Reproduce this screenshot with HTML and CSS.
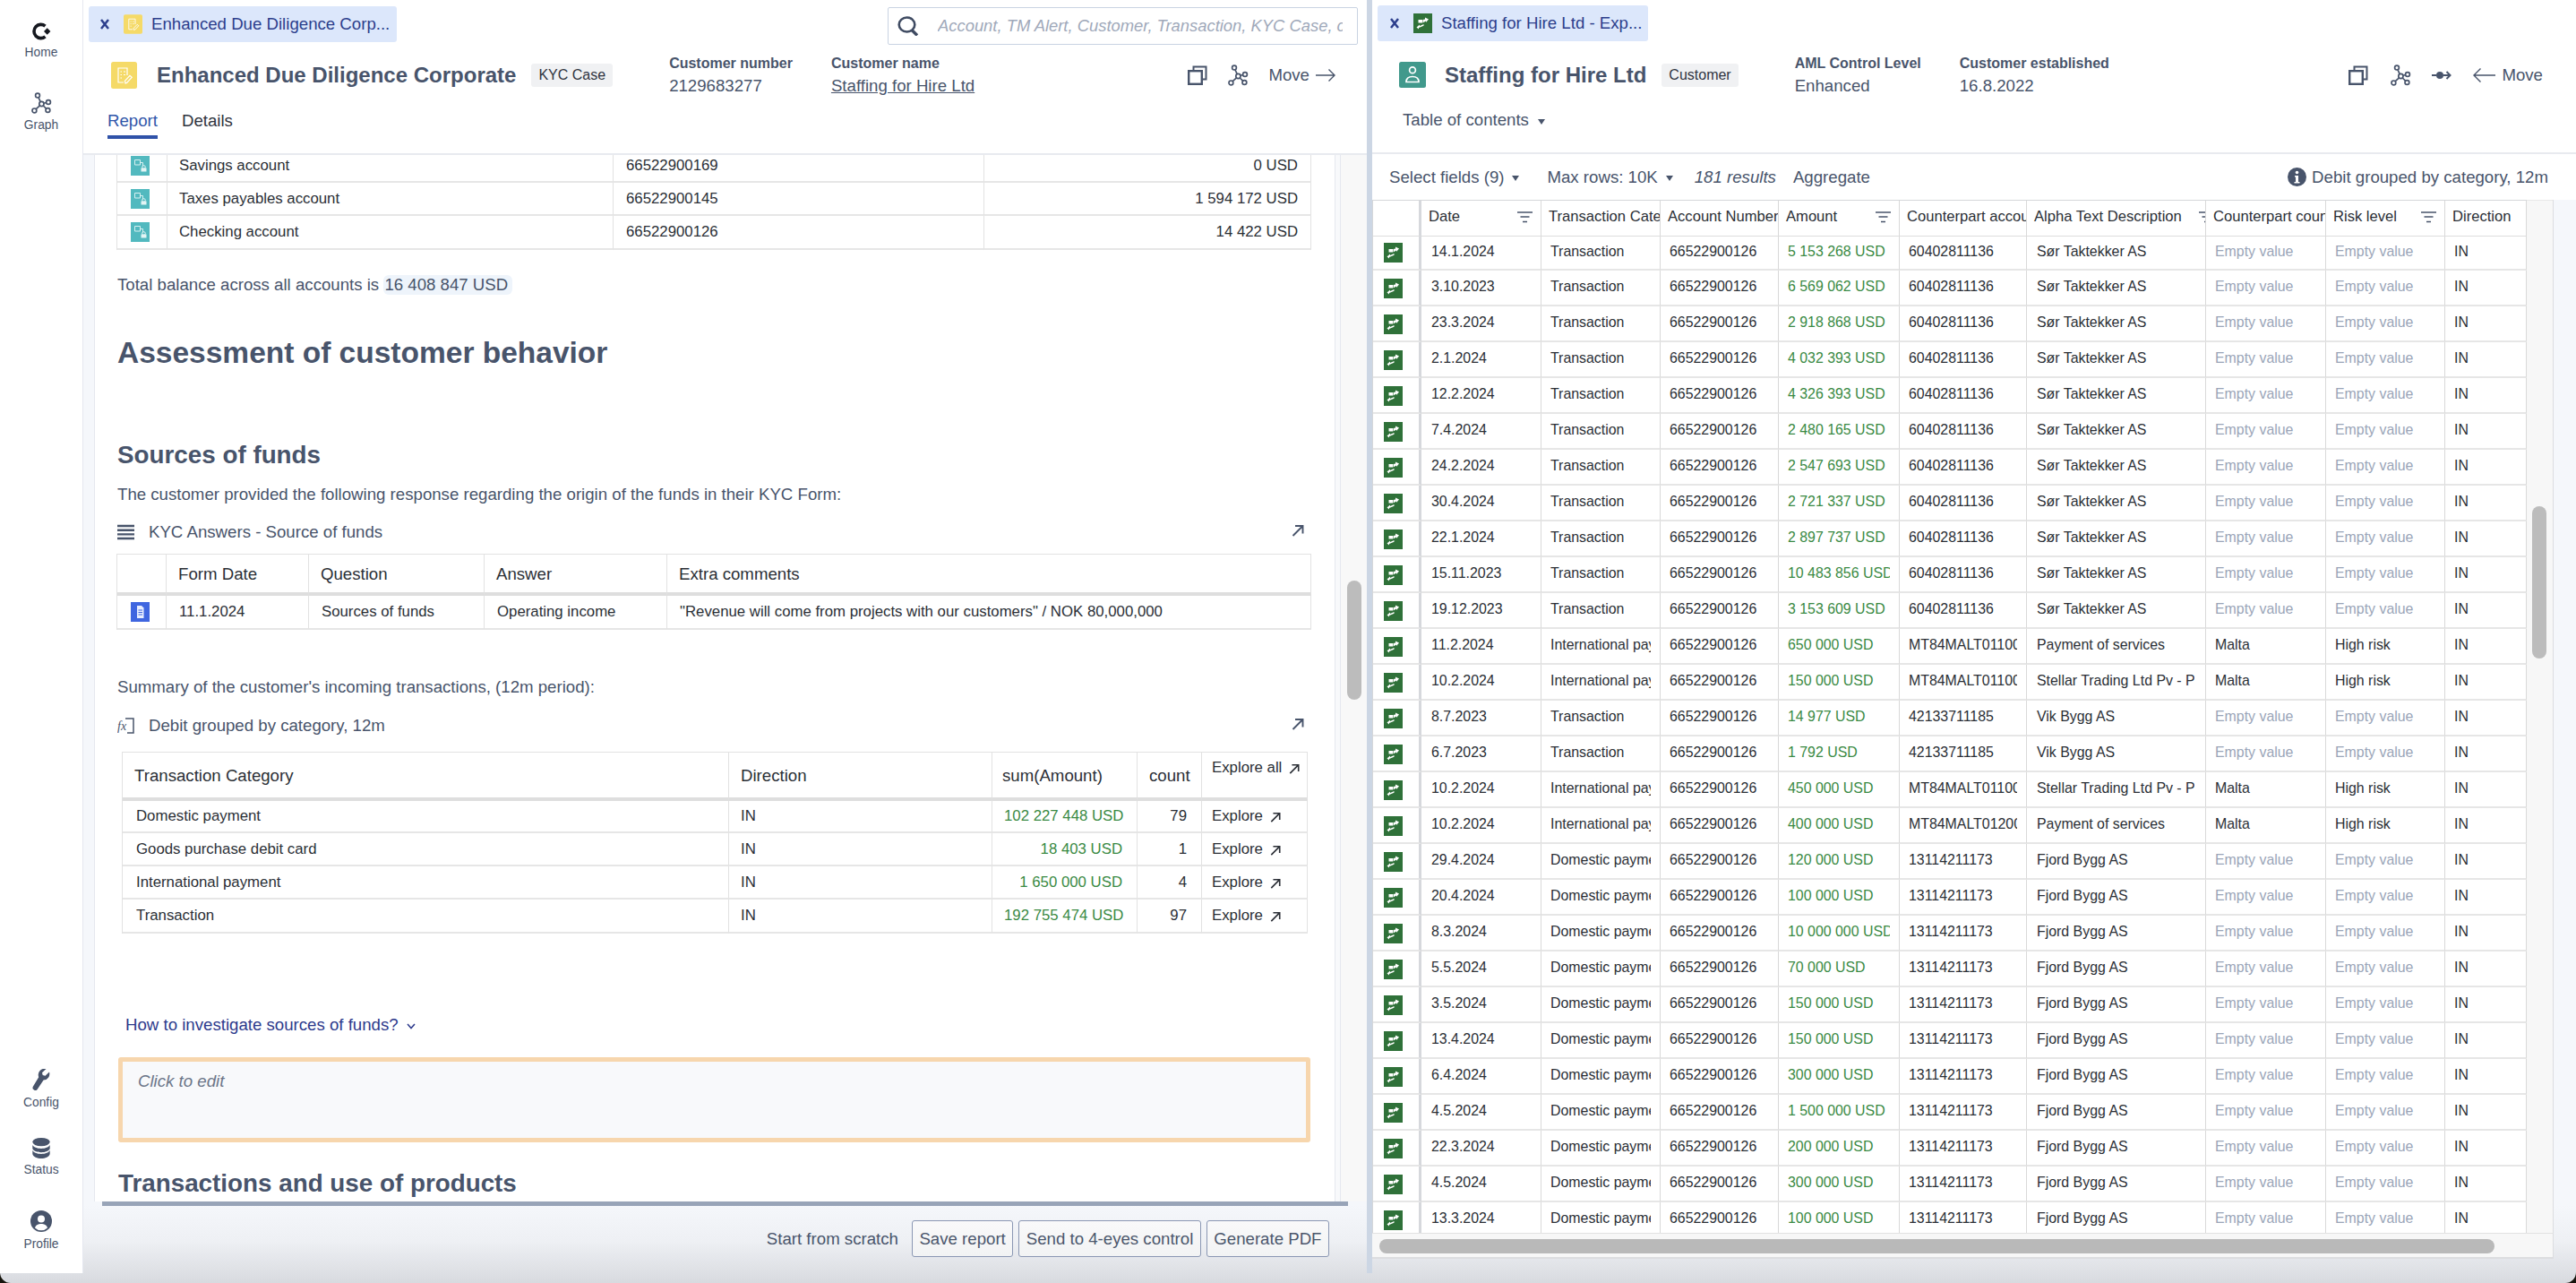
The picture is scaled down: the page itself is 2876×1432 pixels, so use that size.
FILE: index.html
```html
<!DOCTYPE html>
<html lang="en">
<head>
<meta charset="utf-8">
<title>Enhanced Due Diligence Corporate</title>
<link rel="stylesheet" href="styles.css">
</head>
<body>
<svg class="defs" xmlns="http://www.w3.org/2000/svg">
  <symbol id="i-logo" viewBox="0 0 24 24"><path d="M16.5 6.2A7.6 7.6 0 1 0 16.5 17.8" fill="none" stroke="#15181f" stroke-width="3.6"/><path d="M15 12l3.7-3.7 3.7 3.7-3.7 3.7z" fill="#15181f"/></symbol>
  <symbol id="i-graph" viewBox="0 0 24 24"><g fill="none" stroke="currentColor" stroke-width="1.7"><circle cx="8" cy="3.6" r="2.4"/><circle cx="20" cy="11" r="2.4"/><circle cx="19.4" cy="20" r="2.4"/><circle cx="4.4" cy="20.4" r="2.4"/><circle cx="12.4" cy="13" r="2.6"/><path d="M9 5.8l2.3 5M15 12.3l2.7-.8M14.2 15l3.4 3.2M10.5 14.8l-4.5 4"/></g></symbol>
  <symbol id="i-case" viewBox="0 0 29 30"><rect width="29" height="30" rx="2.5" fill="#f5da68"/><g fill="none" stroke="#fff" stroke-width="1.2"><path d="M18 15V7H8v16h6"/><path d="M10.5 11h1.5M14 11h2M10.5 14.5h1.5M14 14.5h2M10.5 18h1.5"/><path d="M16 24l-.6-2.6 5.6-6 2.2 2-5.6 6z"/></g></symbol>
  <symbol id="i-cust" viewBox="0 0 30 29"><rect width="30" height="29" rx="2.5" fill="#41998c"/><g fill="none" stroke="#fff" stroke-width="1.7"><circle cx="15" cy="9.2" r="3.4"/><path d="M8 22.5c0-4 2.600-6 7-6s7 2 7 6z"/></g></symbol>
  <symbol id="i-txn" viewBox="0 0 21 22"><rect width="21" height="22" fill="#2f7139"/><g fill="#fff"><path d="M5.500 7h4.500v3.500H5.500z"/><path d="M10.500 7l2.500-.5V4.500l4 2-3 3.500V8.500l-3.500 2z"/><path d="M11.500 12l-4.500 2v-1.500L3.500 15.500 6 17.500v-1.500l5.500-2.200z"/></g></symbol>
  <symbol id="i-acct" viewBox="0 0 21 22"><rect width="21" height="22" fill="#52b9bf"/><g fill="none" stroke="#d7f0f1" stroke-width="1"><path d="M4.500 4.500h6v5.500h-6z"/><path d="M10.500 7.500h3v4"/></g><path d="M11.500 13.500h6v4h-6z" fill="#e3f5f5"/><circle cx="14.500" cy="12.500" r="1.800" fill="none" stroke="#e3f5f5"/></symbol>
  <symbol id="i-form" viewBox="0 0 21 22"><rect width="21" height="22" fill="#3f66e0"/><path d="M7 4h5l2.500 2.500V18H7z" fill="#e8eeff"/><path d="M8.500 9h4.500M8.500 11.500h4.500M8.500 14h4.500" stroke="#3f66e0"/></symbol>
  <symbol id="i-copy" viewBox="0 0 22 22"><path d="M6.500 6V1.500h14v14H16" fill="none" stroke="currentColor" stroke-width="2"/><rect x="1.200" y="6.200" width="14.600" height="14.600" fill="none" stroke="currentColor" stroke-width="2.400"/></symbol>
  <symbol id="i-right" viewBox="0 0 22 16"><path d="M0 8h21M14.500 1.500L21 8l-6.500 6.500" fill="none" stroke="currentColor" stroke-width="1.400"/></symbol>
  <symbol id="i-left" viewBox="0 0 25 18"><path d="M25 9H1M8.500 1.500L1 9l7.500 7.500" fill="none" stroke="currentColor" stroke-width="1.400"/></symbol>
  <symbol id="i-link" viewBox="0 0 22 12"><path d="M0 6h5M13 6h7M16.500 2L20.500 6l-4 4" fill="none" stroke="currentColor" stroke-width="2"/><circle cx="9" cy="6" r="4" fill="currentColor"/></symbol>
  <symbol id="i-search" viewBox="0 0 24 22"><ellipse cx="10.500" cy="9.500" rx="8.800" ry="8" fill="none" stroke="currentColor" stroke-width="2.600"/><path d="M16 15.500l6 6" stroke="currentColor" stroke-width="3.400"/></symbol>
  <symbol id="i-ne" viewBox="0 0 14 14"><path d="M1.500 13L12 2.500M4 2h8.500v8.500" fill="none" stroke="currentColor" stroke-width="1.900"/></symbol>
  <symbol id="i-filter" viewBox="0 0 17 13"><path d="M0 1h17M3.500 6h10M6 11.500h5" fill="none" stroke="currentColor" stroke-width="1.700"/></symbol>
  <symbol id="i-list" viewBox="0 0 19 17"><path d="M0 1.500h19M0 6.200h19M0 10.900h19M0 15.500h19" stroke="currentColor" stroke-width="2.400"/></symbol>
  <symbol id="i-fx" viewBox="0 0 19 18"><path d="M9 1h9v16h-7" fill="none" stroke="currentColor" stroke-width="1.500"/><text x="0" y="14" font-family="Liberation Serif" font-style="italic" font-size="14" fill="currentColor">fx</text></symbol>
  <symbol id="i-info" viewBox="0 0 21 21"><circle cx="10.500" cy="10.500" r="10.500" fill="currentColor"/><circle cx="10.500" cy="5.500" r="1.800" fill="#fff"/><path d="M8 9h4v7h1.500v1.500h-6V16H9V10.500H8z" fill="#fff"/></symbol>
  <symbol id="i-wrench" viewBox="0 0 24 24"><path d="M21 3.500l-4.500 4.300-2.800-.8-.7-2.800L17.500 0a7 7 0 0 0-8.300 9.200L3 19.500a2.900 2.900 0 0 0 4.600 3.500l7-10.400A7 7 0 0 0 21 3.500z" fill="currentColor"/></symbol>
  <symbol id="i-db" viewBox="0 0 24 26"><g fill="currentColor"><ellipse cx="12" cy="5" rx="10.500" ry="5"/><path d="M1.500 8.500c1 3 5.500 4.500 10.500 4.500s9.500-1.500 10.500-4.500V13c-1 3-5.500 4.500-10.500 4.500S2.500 16 1.500 13z"/><path d="M1.500 15c1 3 5.500 4.500 10.500 4.500S21.500 18 22.500 15v4.500c-1 3.500-5.500 5.500-10.500 5.500S2.500 23 1.500 19.500z"/></g></symbol>
  <symbol id="i-user" viewBox="0 0 24 24"><circle cx="12" cy="12" r="12" fill="currentColor"/><circle cx="12" cy="9.500" r="4" fill="#fff"/><path d="M5 19.500c1-3.500 4-4.500 7-4.500s6 1 7 4.500A10 10 0 0 1 5 19.500z" fill="#fff"/></symbol>
  <symbol id="i-x" viewBox="0 0 10 12"><path d="M1 1l8 10M9 1L1 11" fill="none" stroke="currentColor" stroke-width="2.500"/></symbol>
  <symbol id="i-chev" viewBox="0 0 10 7"><path d="M1 1l4 4.500L9 1" fill="none" stroke="currentColor" stroke-width="1.500"/></symbol>
</svg>

<div class="app">
  <nav class="sidebar">
    <div class="nav-group">
      <a class="nav-item"><svg class="nav-ic"><use href="#i-logo"/></svg><span>Home</span></a>
      <a class="nav-item nav-graph"><svg class="nav-ic"><use href="#i-graph"/></svg><span>Graph</span></a>
    </div>
    <div class="nav-group low">
      <a class="nav-item nav-config"><svg class="nav-ic"><use href="#i-wrench"/></svg><span>Config</span></a>
      <a class="nav-item nav-status"><svg class="nav-ic"><use href="#i-db"/></svg><span>Status</span></a>
      <a class="nav-item nav-profile"><svg class="nav-ic"><use href="#i-user"/></svg><span>Profile</span></a>
    </div>
  </nav>

  <section class="panel left">
    <div class="topbar">
      <div class="tab"><svg class="tab-x"><use href="#i-x"/></svg><svg class="tab-ic"><use href="#i-case"/></svg><span>Enhanced Due Diligence Corp...</span></div>
      <div class="search"><svg class="search-ic"><use href="#i-search"/></svg><span class="search-text">Account, TM Alert, Customer, Transaction, KYC Case, customer</span></div>
    </div>
    <header class="head">
      <svg class="head-ic"><use href="#i-case"/></svg>
      <h1 class="title">Enhanced Due Diligence Corporate</h1>
      <span class="badge">KYC Case</span>
      <div class="meta">
        <div><b>Customer number</b><span>2129683277</span></div>
        <div><b>Customer name</b><a class="ul">Staffing for Hire Ltd</a></div>
      </div>
      <div class="actions">
        <svg class="a-copy"><use href="#i-copy"/></svg>
        <svg class="a-graph"><use href="#i-graph"/></svg>
        <span class="move">Move <svg class="a-arrow"><use href="#i-right"/></svg></span>
      </div>
    </header>
    <div class="tabs"><a class="on">Report</a><a>Details</a></div>

    <div class="rbody">
      <div class="gut"></div>
      <div class="paper">
        <table class="tb acct">
          <colgroup><col class="w56"><col class="w498"><col class="w414"><col class="w365"></colgroup>
          <tr><td class="ic"><svg class="cell-ic"><use href="#i-acct"/></svg></td><td>Savings account</td><td>66522900169</td><td class="r">0 USD</td></tr>
          <tr><td class="ic"><svg class="cell-ic"><use href="#i-acct"/></svg></td><td>Taxes payables account</td><td>66522900145</td><td class="r">1 594 172 USD</td></tr>
          <tr><td class="ic"><svg class="cell-ic"><use href="#i-acct"/></svg></td><td>Checking account</td><td>66522900126</td><td class="r">14 422 USD</td></tr>
        </table>
        <p class="txt total">Total balance across all accounts is <span class="hl">16 408 847 USD</span></p>
        <h2 class="h-big">Assessment of customer behavior</h2>
        <h3 class="h-mid funds">Sources of funds</h3>
        <p class="txt resp">The customer provided the following response regarding the origin of the funds in their KYC Form:</p>
        <div class="cap kyc-cap"><svg class="cap-ic"><use href="#i-list"/></svg><span>KYC Answers - Source of funds</span><svg class="cap-go"><use href="#i-ne"/></svg></div>
        <table class="tb kyc">
          <colgroup><col class="w55"><col class="w159"><col class="w196"><col class="w204"><col class="w719"></colgroup>
          <tr><th></th><th>Form Date</th><th>Question</th><th>Answer</th><th>Extra comments</th></tr>
          <tr><td class="ic"><svg class="cell-ic"><use href="#i-form"/></svg></td><td>11.1.2024</td><td>Sources of funds</td><td>Operating income</td><td>"Revenue will come from projects with our customers" / NOK 80,000,000</td></tr>
        </table>
        <p class="txt summary">Summary of the customer's incoming transactions, (12m period):</p>
        <div class="cap debit-cap"><svg class="cap-ic"><use href="#i-fx"/></svg><span>Debit grouped by category, 12m</span><svg class="cap-go"><use href="#i-ne"/></svg></div>
        <table class="tb sum">
          <colgroup><col class="w677"><col class="w294"><col class="w162"><col class="w72"><col class="w118"></colgroup>
          <tr><th>Transaction Category</th><th>Direction</th><th>sum(Amount)</th><th>count</th><th class="ex-all">Explore all <svg class="ex-go"><use href="#i-ne"/></svg></th></tr>
          <tr><td>Domestic payment</td><td>IN</td><td class="r g">102 227 448 USD</td><td class="r">79</td><td>Explore <svg class="ex-go"><use href="#i-ne"/></svg></td></tr>
          <tr><td>Goods purchase debit card</td><td>IN</td><td class="r g">18 403 USD</td><td class="r">1</td><td>Explore <svg class="ex-go"><use href="#i-ne"/></svg></td></tr>
          <tr><td>International payment</td><td>IN</td><td class="r g">1 650 000 USD</td><td class="r">4</td><td>Explore <svg class="ex-go"><use href="#i-ne"/></svg></td></tr>
          <tr><td>Transaction</td><td>IN</td><td class="r g">192 755 474 USD</td><td class="r">97</td><td>Explore <svg class="ex-go"><use href="#i-ne"/></svg></td></tr>
        </table>
        <a class="howto">How to investigate sources of funds? <svg class="chev"><use href="#i-chev"/></svg></a>
        <div class="editbox">Click to edit</div>
        <h3 class="h-mid trans">Transactions and use of products</h3>
      </div>
      <div class="edge"></div>
      <div class="vgut"><div class="thumb"></div></div>
    </div>
    <div class="rule"></div>
    <footer class="foot">
      <span class="scratch">Start from scratch</span>
      <button class="btn">Save report</button>
      <button class="btn">Send to 4-eyes control</button>
      <button class="btn">Generate PDF</button>
    </footer>
  </section>

  <div class="divider"></div>

  <section class="panel right">
    <div class="topbar">
      <div class="tab tab2"><svg class="tab-x"><use href="#i-x"/></svg><svg class="tab-ic"><use href="#i-txn"/></svg><span>Staffing for Hire Ltd - Exp...</span></div>
    </div>
    <header class="head head2">
      <svg class="head-ic"><use href="#i-cust"/></svg>
      <h1 class="title">Staffing for Hire Ltd</h1>
      <span class="badge">Customer</span>
      <div class="meta">
        <div><b>AML Control Level</b><span>Enhanced</span></div>
        <div><b>Customer established</b><span>16.8.2022</span></div>
      </div>
      <div class="actions">
        <svg class="a-copy"><use href="#i-copy"/></svg>
        <svg class="a-graph"><use href="#i-graph"/></svg>
        <svg class="a-link"><use href="#i-link"/></svg>
        <span class="move"><svg class="a-back"><use href="#i-left"/></svg> Move</span>
      </div>
    </header>
    <div class="toc">Table of contents <i class="caret"></i></div>
    <div class="tool">
      <span>Select fields (9)</span><i class="caret"></i>
      <span class="t-max">Max rows: 10K</span><i class="caret"></i>
      <em class="t-res">181 results</em>
      <span class="t-agg">Aggregate</span>
      <span class="t-info"><svg class="info-ic"><use href="#i-info"/></svg>Debit grouped by category, 12m</span>
    </div>
    <div class="gwrap">
      <div class="gclip">
        <table class="gt">
          <colgroup><col class="g0"><col class="g1"><col class="g2"><col class="g3"><col class="g4"><col class="g5"><col class="g6"><col class="g7"><col class="g8"><col class="g9"></colgroup>
          <thead><tr>
            <th></th>
            <th><div class="thf">Date<svg class="flt"><use href="#i-filter"/></svg></div></th>
            <th>Transaction Category</th>
            <th>Account Number</th>
            <th><div class="thf">Amount<svg class="flt"><use href="#i-filter"/></svg></div></th>
            <th>Counterpart account</th>
            <th><div class="thf wide">Alpha Text Description<svg class="flt"><use href="#i-filter"/></svg></div></th>
            <th>Counterpart country</th>
            <th><div class="thf">Risk level<svg class="flt"><use href="#i-filter"/></svg></div></th>
            <th>Direction</th>
          </tr></thead>
          <tbody>
<tr><td><svg class="cell-ic"><use href="#i-txn"/></svg></td><td>14.1.2024</td><td>Transaction</td><td>66522900126</td><td class="g">5 153 268 USD</td><td>60402811136</td><td>Sør Taktekker AS</td><td class="e">Empty value</td><td class="e">Empty value</td><td>IN</td></tr>
<tr><td><svg class="cell-ic"><use href="#i-txn"/></svg></td><td>3.10.2023</td><td>Transaction</td><td>66522900126</td><td class="g">6 569 062 USD</td><td>60402811136</td><td>Sør Taktekker AS</td><td class="e">Empty value</td><td class="e">Empty value</td><td>IN</td></tr>
<tr><td><svg class="cell-ic"><use href="#i-txn"/></svg></td><td>23.3.2024</td><td>Transaction</td><td>66522900126</td><td class="g">2 918 868 USD</td><td>60402811136</td><td>Sør Taktekker AS</td><td class="e">Empty value</td><td class="e">Empty value</td><td>IN</td></tr>
<tr><td><svg class="cell-ic"><use href="#i-txn"/></svg></td><td>2.1.2024</td><td>Transaction</td><td>66522900126</td><td class="g">4 032 393 USD</td><td>60402811136</td><td>Sør Taktekker AS</td><td class="e">Empty value</td><td class="e">Empty value</td><td>IN</td></tr>
<tr><td><svg class="cell-ic"><use href="#i-txn"/></svg></td><td>12.2.2024</td><td>Transaction</td><td>66522900126</td><td class="g">4 326 393 USD</td><td>60402811136</td><td>Sør Taktekker AS</td><td class="e">Empty value</td><td class="e">Empty value</td><td>IN</td></tr>
<tr><td><svg class="cell-ic"><use href="#i-txn"/></svg></td><td>7.4.2024</td><td>Transaction</td><td>66522900126</td><td class="g">2 480 165 USD</td><td>60402811136</td><td>Sør Taktekker AS</td><td class="e">Empty value</td><td class="e">Empty value</td><td>IN</td></tr>
<tr><td><svg class="cell-ic"><use href="#i-txn"/></svg></td><td>24.2.2024</td><td>Transaction</td><td>66522900126</td><td class="g">2 547 693 USD</td><td>60402811136</td><td>Sør Taktekker AS</td><td class="e">Empty value</td><td class="e">Empty value</td><td>IN</td></tr>
<tr><td><svg class="cell-ic"><use href="#i-txn"/></svg></td><td>30.4.2024</td><td>Transaction</td><td>66522900126</td><td class="g">2 721 337 USD</td><td>60402811136</td><td>Sør Taktekker AS</td><td class="e">Empty value</td><td class="e">Empty value</td><td>IN</td></tr>
<tr><td><svg class="cell-ic"><use href="#i-txn"/></svg></td><td>22.1.2024</td><td>Transaction</td><td>66522900126</td><td class="g">2 897 737 USD</td><td>60402811136</td><td>Sør Taktekker AS</td><td class="e">Empty value</td><td class="e">Empty value</td><td>IN</td></tr>
<tr><td><svg class="cell-ic"><use href="#i-txn"/></svg></td><td>15.11.2023</td><td>Transaction</td><td>66522900126</td><td class="g"><div class="c">10 483 856 USD</div></td><td>60402811136</td><td>Sør Taktekker AS</td><td class="e">Empty value</td><td class="e">Empty value</td><td>IN</td></tr>
<tr><td><svg class="cell-ic"><use href="#i-txn"/></svg></td><td>19.12.2023</td><td>Transaction</td><td>66522900126</td><td class="g">3 153 609 USD</td><td>60402811136</td><td>Sør Taktekker AS</td><td class="e">Empty value</td><td class="e">Empty value</td><td>IN</td></tr>
<tr><td><svg class="cell-ic"><use href="#i-txn"/></svg></td><td>11.2.2024</td><td><div class="c">International payment</div></td><td>66522900126</td><td class="g">650 000 USD</td><td><div class="c">MT84MALT011000000000</div></td><td>Payment of services</td><td>Malta</td><td>High risk</td><td>IN</td></tr>
<tr><td><svg class="cell-ic"><use href="#i-txn"/></svg></td><td>10.2.2024</td><td><div class="c">International payment</div></td><td>66522900126</td><td class="g">150 000 USD</td><td><div class="c">MT84MALT011000000000</div></td><td><div class="c">Stellar Trading Ltd Pv - Payment of services</div></td><td>Malta</td><td>High risk</td><td>IN</td></tr>
<tr><td><svg class="cell-ic"><use href="#i-txn"/></svg></td><td>8.7.2023</td><td>Transaction</td><td>66522900126</td><td class="g">14 977 USD</td><td>42133711185</td><td>Vik Bygg AS</td><td class="e">Empty value</td><td class="e">Empty value</td><td>IN</td></tr>
<tr><td><svg class="cell-ic"><use href="#i-txn"/></svg></td><td>6.7.2023</td><td>Transaction</td><td>66522900126</td><td class="g">1 792 USD</td><td>42133711185</td><td>Vik Bygg AS</td><td class="e">Empty value</td><td class="e">Empty value</td><td>IN</td></tr>
<tr><td><svg class="cell-ic"><use href="#i-txn"/></svg></td><td>10.2.2024</td><td><div class="c">International payment</div></td><td>66522900126</td><td class="g">450 000 USD</td><td><div class="c">MT84MALT011000000000</div></td><td><div class="c">Stellar Trading Ltd Pv - Payment of services</div></td><td>Malta</td><td>High risk</td><td>IN</td></tr>
<tr><td><svg class="cell-ic"><use href="#i-txn"/></svg></td><td>10.2.2024</td><td><div class="c">International payment</div></td><td>66522900126</td><td class="g">400 000 USD</td><td><div class="c">MT84MALT012000000000</div></td><td>Payment of services</td><td>Malta</td><td>High risk</td><td>IN</td></tr>
<tr><td><svg class="cell-ic"><use href="#i-txn"/></svg></td><td>29.4.2024</td><td><div class="c">Domestic payment</div></td><td>66522900126</td><td class="g">120 000 USD</td><td>13114211173</td><td>Fjord Bygg AS</td><td class="e">Empty value</td><td class="e">Empty value</td><td>IN</td></tr>
<tr><td><svg class="cell-ic"><use href="#i-txn"/></svg></td><td>20.4.2024</td><td><div class="c">Domestic payment</div></td><td>66522900126</td><td class="g">100 000 USD</td><td>13114211173</td><td>Fjord Bygg AS</td><td class="e">Empty value</td><td class="e">Empty value</td><td>IN</td></tr>
<tr><td><svg class="cell-ic"><use href="#i-txn"/></svg></td><td>8.3.2024</td><td><div class="c">Domestic payment</div></td><td>66522900126</td><td class="g"><div class="c">10 000 000 USD</div></td><td>13114211173</td><td>Fjord Bygg AS</td><td class="e">Empty value</td><td class="e">Empty value</td><td>IN</td></tr>
<tr><td><svg class="cell-ic"><use href="#i-txn"/></svg></td><td>5.5.2024</td><td><div class="c">Domestic payment</div></td><td>66522900126</td><td class="g">70 000 USD</td><td>13114211173</td><td>Fjord Bygg AS</td><td class="e">Empty value</td><td class="e">Empty value</td><td>IN</td></tr>
<tr><td><svg class="cell-ic"><use href="#i-txn"/></svg></td><td>3.5.2024</td><td><div class="c">Domestic payment</div></td><td>66522900126</td><td class="g">150 000 USD</td><td>13114211173</td><td>Fjord Bygg AS</td><td class="e">Empty value</td><td class="e">Empty value</td><td>IN</td></tr>
<tr><td><svg class="cell-ic"><use href="#i-txn"/></svg></td><td>13.4.2024</td><td><div class="c">Domestic payment</div></td><td>66522900126</td><td class="g">150 000 USD</td><td>13114211173</td><td>Fjord Bygg AS</td><td class="e">Empty value</td><td class="e">Empty value</td><td>IN</td></tr>
<tr><td><svg class="cell-ic"><use href="#i-txn"/></svg></td><td>6.4.2024</td><td><div class="c">Domestic payment</div></td><td>66522900126</td><td class="g">300 000 USD</td><td>13114211173</td><td>Fjord Bygg AS</td><td class="e">Empty value</td><td class="e">Empty value</td><td>IN</td></tr>
<tr><td><svg class="cell-ic"><use href="#i-txn"/></svg></td><td>4.5.2024</td><td><div class="c">Domestic payment</div></td><td>66522900126</td><td class="g">1 500 000 USD</td><td>13114211173</td><td>Fjord Bygg AS</td><td class="e">Empty value</td><td class="e">Empty value</td><td>IN</td></tr>
<tr><td><svg class="cell-ic"><use href="#i-txn"/></svg></td><td>22.3.2024</td><td><div class="c">Domestic payment</div></td><td>66522900126</td><td class="g">200 000 USD</td><td>13114211173</td><td>Fjord Bygg AS</td><td class="e">Empty value</td><td class="e">Empty value</td><td>IN</td></tr>
<tr><td><svg class="cell-ic"><use href="#i-txn"/></svg></td><td>4.5.2024</td><td><div class="c">Domestic payment</div></td><td>66522900126</td><td class="g">300 000 USD</td><td>13114211173</td><td>Fjord Bygg AS</td><td class="e">Empty value</td><td class="e">Empty value</td><td>IN</td></tr>
<tr><td><svg class="cell-ic"><use href="#i-txn"/></svg></td><td>13.3.2024</td><td><div class="c">Domestic payment</div></td><td>66522900126</td><td class="g">100 000 USD</td><td>13114211173</td><td>Fjord Bygg AS</td><td class="e">Empty value</td><td class="e">Empty value</td><td>IN</td></tr>
          </tbody>
        </table>
      </div>
      <div class="vgut2"><div class="thumb2"></div></div>
    </div>
    <div class="hgut"><div class="hthumb"></div></div>
  </section>
</div>
</body>
</html>
```

FILE: styles.css
```css
* { box-sizing: border-box; }
html, body { margin: 0; height: 100%; background: #16140c; }
body { font-family: "Liberation Sans", Arial, sans-serif; font-size: 18.65px; color: #48546b; overflow: hidden; }
.defs { display: none; }
svg { display: block; flex: none; }

.app {
  display: flex;
  width: 2876px;
  height: 1432px;
  overflow: hidden;
  border-radius: 0 0 12px 12px;
  background: linear-gradient(#f5f7fb 0, #f5f7fb 1345px, #eef0f4 1385px, #d8dadf 1432px);
}

/* sidebar */
.sidebar {
  width: 93px;
  height: 1421px;
  flex: none;
  display: flex;
  flex-direction: column;
  justify-content: space-between;
  background: #fff;
  border-right: 1px solid #e5e8ef;
  padding: 23px 0 23px;
}
.nav-group { display: flex; flex-direction: column; gap: 35px; }
.nav-group.low { gap: 0; }
.nav-item { display: flex; flex-direction: column; align-items: center; gap: 3px; font-size: 13.8px; line-height: 18px; color: #48546b; }
.nav-graph { gap: 4px; }
.nav-config { gap: 5px; margin-bottom: 30px; }
.nav-status { gap: 3px; margin-bottom: 36px; }
.nav-profile { gap: 5px; }
.nav-ic { width: 24px; height: 24px; color: #48546b; }

/* panels */
.panel { display: flex; flex-direction: column; height: 1432px; }
.left { width: 1433px; flex: none; }
.right { width: 1344px; flex: none; }
.divider { width: 6px; height: 1421px; flex: none; background: #ccd6e4; }

.topbar { height: 55px; display: flex; align-items: flex-start; padding-left: 6px; background: #fff; }
.tab {
  display: flex; align-items: center;
  width: 344px; height: 40px; margin-top: 7px; padding-left: 13px;
  background: #dce7fb; border-radius: 3px; color: #2c3e8c; white-space: nowrap;
}
.tab2 { width: 302px; margin-top: 6px; padding-left: 14px; }
.tab-x { width: 10px; height: 12px; margin-right: 16px; color: #2c3e8c; }
.tab-ic { width: 21px; height: 22px; margin-right: 10px; }
.search {
  display: flex; align-items: center;
  width: 525px; height: 42px; margin: 8px 10px 0 auto; padding-left: 10px;
  background: #fff; border: 1px solid #c9d3e2; border-radius: 2px; overflow: hidden;
}
.search-ic { width: 24px; height: 22px; color: #3f4b62; margin-right: 21px; }
.search-text { width: 452px; flex: none; overflow: hidden; white-space: nowrap; font-size: 18.4px; font-style: italic; color: #a0a9ba; }

.head { height: 58px; display: flex; align-items: center; padding-left: 31px; background: #fff; }
.head2 { height: 57px; padding-left: 30px; }
.head-ic { width: 29px; height: 30px; margin-right: 22px; }
.head2 .head-ic { width: 30px; height: 29px; margin-right: 21px; }
.title { margin: 0; font-size: 24px; line-height: 30px; font-weight: 700; color: #48546b; white-space: nowrap; }
.badge { margin-left: 17px; padding: 0 8px; height: 26px; line-height: 26px; font-size: 16px; color: #2f3440; background: #f0f1f3; border-radius: 3px; }
.meta { display: flex; gap: 43px; margin-left: 63px; }
.meta div { display: flex; flex-direction: column; }
.meta b { font-size: 16px; line-height: 24px; font-weight: 700; color: #48546b; white-space: nowrap; }
.meta span, .meta a { line-height: 26px; color: #48546b; }
.ul { text-decoration: underline; }
.actions { display: flex; align-items: center; margin-left: auto; padding-right: 35px; color: #48546b; }
.head2 .actions { padding-right: 37px; }
.a-copy { width: 22px; height: 22px; margin-right: 22px; }
.a-graph { width: 24px; height: 24px; margin-right: 22px; }
.head2 .a-copy { margin-right: 24px; }
.head2 .a-graph { margin-right: 23px; }
.a-link { width: 22px; height: 12px; margin-right: 24px; }
.move { display: flex; align-items: center; gap: 7px; }
.a-arrow { width: 22px; height: 16px; }
.a-back { width: 25px; height: 18px; }

.tabs { height: 60px; display: flex; gap: 27px; align-items: flex-start; padding-left: 27px; background: #fff; border-bottom: 2px solid #e8eaef; }
.tabs a { padding-top: 10px; line-height: 24px; padding-bottom: 4px; border-bottom: 4px solid transparent; color: #2f3440; }
.tabs a.on { color: #3056a9; border-bottom-color: #2f52a8; }

/* report body */
.rbody { height: 1168px; display: flex; flex: none; }
.gut { width: 12px; flex: none; background: #f5f7fb; }
.paper { width: 1385px; flex: none; background: #fff; border-left: 1px solid #e5e8ef; padding: 0 27px 0 25px; overflow: hidden; }
.edge { width: 7px; flex: none; background: #f8f9fb; border-left: 1px solid #e5e8ef; border-right: 1px solid #e5e8ef; }
.vgut { width: 29px; flex: none; background: #f8f8f8; padding: 475px 0 0 7px; }
.thumb { width: 16px; height: 133px; border-radius: 8px; background: #bcbcbc; }

.tb { border-collapse: separate; border-spacing: 0; table-layout: fixed; width: 1333px; margin-left: -1px; border-top: 1px solid #e2e2e2; border-left: 1px solid #e2e2e2; font-size: 16.8px; color: #2b2f36; }
.tb td, .tb th { border-right: 1px solid #e2e2e2; border-bottom: 2px solid #e6e6e6; padding: 0 14px; line-height: 20px; text-align: left; font-weight: 400; white-space: nowrap; overflow: hidden; }
.tb th { font-size: 18.65px; border-bottom: 4px solid #dedede; padding: 1px 14px 0 13px; }
.tb .r { text-align: right; }
.tb .g { color: #3a8a44; }
.tb .ic { padding: 0 0 0 15px; }
.cell-ic { width: 21px; height: 22px; }

.w56 { width: 56px; } .w498 { width: 498px; } .w414 { width: 414px; } .w365 { width: 365px; }
.w55 { width: 55px; } .w159 { width: 159px; } .w196 { width: 196px; } .w204 { width: 204px; } .w719 { width: 719px; }
.w677 { width: 677px; } .w294 { width: 294px; } .w162 { width: 162px; } .w72 { width: 72px; } .w118 { width: 118px; }

.acct { margin-top: -7px; }
.acct td { height: 37px; }
.acct td:nth-child(2) { padding-left: 13px; }
.acct tr:last-child td { height: 38px; }
.kyc { margin-top: 13px; }
.kyc th { height: 46px; }
.kyc td { height: 38px; }
.sum { width: 1323px; margin: 18px 0 0 5px; }
.sum th { height: 54px; }
.sum td { height: 37px; }
.sum tr:nth-child(2) td { height: 36px; }
.sum tr:last-child td { height: 38px; }
.sum th { padding: 1px 16px 0 13px; }
.sum td { padding: 0 16px 0 13px; }
.sum td:first-child { padding-left: 15px; }
.sum th:nth-child(3) { padding-left: 11px; }
.sum th:last-child { font-size: 16.8px; vertical-align: top; padding: 7px 0 0 11px; }
.sum td:last-child { padding: 0 0 0 11px; }
.ex-go { display: inline-block; width: 12px; height: 12px; margin-left: 3px; color: #2b2f36; vertical-align: -2px; }

.txt { margin: 0; line-height: 22px; color: #48546b; white-space: nowrap; }
.total { margin-top: 28px; }
.hl { display: inline-block; padding: 0 5px 0 1px; border-radius: 6px; background: #eef4fb; }
.h-big { margin: 45px 0 0; font-size: 33.5px; line-height: 40px; font-weight: 700; color: #48546b; }
.h-mid { margin: 0; font-size: 27.8px; line-height: 32px; font-weight: 700; color: #48546b; }
.funds { margin-top: 78px; }
.resp { margin-top: 17px; }
.cap { display: flex; align-items: center; height: 22px; padding-right: 7px; color: #48546b; width: 1332px; }
.kyc-cap { margin-top: 20px; }
.debit-cap { margin-top: 21px; }
.cap-ic { width: 19px; height: 18px; margin-right: 16px; }
.cap-go { width: 14px; height: 14px; margin-left: auto; margin-top: -4px; }
.summary { margin-top: 53px; }
.howto { display: flex; align-items: center; gap: 9px; margin: 91px 0 0 9px; line-height: 22px; color: #2d3a8c; }
.chev { width: 10px; height: 7px; margin-top: 3px; color: #2d3a8c; }
.editbox { margin: 25px 0 0 1px; width: 1331px; height: 95px; padding: 11px 17px; border: 5px solid #f7d6ad; border-radius: 3px; background: #f8f9fb; font-style: italic; line-height: 22px; color: #6b7588; }
.trans { margin: 30px 0 0 1px; }

.rule { height: 5px; margin: 0 21px; flex: none; background: #98a4b8; }
.foot { flex: 1; display: flex; align-items: flex-start; justify-content: flex-end; gap: 6px; padding: 16px 42px 0 0; }
.scratch { line-height: 41px; margin-right: 9px; color: #48546b; }
.btn { height: 41px; padding: 0 7.5px; font: inherit; color: #4b566c; background: linear-gradient(#f9f9fa, #f2f3f4); border: 1px solid #8a97b3; border-radius: 3px; }

/* right panel */
.toc { height: 60px; padding: 11px 0 0 34px; line-height: 22px; background: #fff; border-bottom: 2px solid #e8eaef; color: #48546b; }
.caret { display: inline-block; width: 0; height: 0; margin-left: 5px; vertical-align: 1px; border-top: 6px solid #48546b; border-left: 4.5px solid transparent; border-right: 4.5px solid transparent; }
.tool { height: 51px; display: flex; align-items: center; padding: 0 31px 0 19px; background: #fff; color: #48546b; white-space: nowrap; }
.tool .caret { margin-left: 9px; margin-top: 3px; }
.t-max { margin-left: 31px; }
.t-res { margin-left: 24px; }
.t-agg { margin-left: 19px; }
.t-info { display: flex; align-items: center; gap: 6px; margin-left: auto; }
.info-ic { width: 21px; height: 21px; color: #48546b; }

.gwrap { height: 1153px; flex: none; display: flex; width: 1319px; border-right: 1px solid #dcdde0; background: #f7f7f7; }
.gclip { width: 1289px; flex: none; overflow: hidden; background: #fff; border-top: 1px solid #d5d7da; border-left: 1px solid #d5d7da; }
.vgut2 { flex: 1; padding: 341px 0 0 6px; border-top: 1px solid #e8e8e8; }
.thumb2 { width: 16px; height: 170px; border-radius: 8px; background: #bcbcbc; }
.hgut { width: 1319px; height: 29px; flex: none; padding: 6px 0 0 8px; background: #f7f7f7; border-right: 1px solid #dcdde0; border-bottom: 2px solid #dcdde0; border-top: 1px solid #e2e2e2; }
.hthumb { width: 1245px; height: 16px; border-radius: 8px; background: #b9b9b9; }

.gt { border-collapse: separate; border-spacing: 0; table-layout: fixed; width: 1288px; font-size: 15.9px; color: #2b2f36; }
.g0 { width: 54px; } .g1 { width: 134px; } .g2 { width: 133px; } .g3 { width: 132px; } .g4 { width: 135px; }
.g5 { width: 142px; } .g6 { width: 200px; } .g7 { width: 134px; } .g8 { width: 133px; } .g9 { width: 91px; }
.gt th { height: 40px; padding: 0 0 3px 8px; font-size: 16.6px; line-height: 20px; font-weight: 400; text-align: left; white-space: nowrap; overflow: hidden; border-right: 1px solid #d9d9d9; border-bottom: 1px solid #dcdcdc; }
.gt td { height: 40px; padding: 8px 0 0 10px; line-height: 20px; vertical-align: top; white-space: nowrap; overflow: hidden; border-right: 1px solid #d9d9d9; border-bottom: 2px solid #e6e6e6; }
.gt th:first-child, .gt td:first-child { border-right: 3px solid #d6d8dc; }
.gt td:first-child { padding: 9px 0 0 12px; }
.gt td:nth-child(2), .gt td:nth-child(7) { padding-left: 11px; }
.gt tbody tr:first-child td { height: 38px; padding-top: 7px; }
.gt .g { color: #3a8a44; }
.gt .e { color: #9aa5b8; }
.c { overflow: hidden; margin-right: 10px; }
.gt td:nth-child(7) .c { margin-right: 12px; }
.thf { display: flex; align-items: center; justify-content: space-between; padding-right: 9px; }
.thf.wide { width: 201px; padding-right: 0; }
.flt { width: 17px; height: 13px; color: #48546b; }
```
